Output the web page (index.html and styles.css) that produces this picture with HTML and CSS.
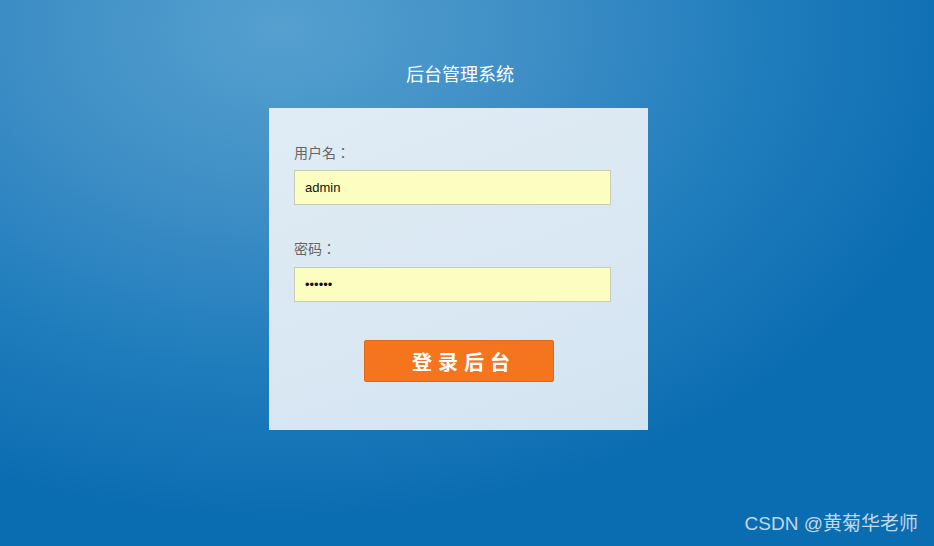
FILE: index.html
```html
<!DOCTYPE html>
<html>

<head>
  <title>后台管理系统</title>
  <link rel="stylesheet" href="styles.css">
</head>

<body>
  <div class="page">
    <h1 class="title">后台管理系统</h1>

    <!-- Login box -->
    <form class="login-box">
      <label class="field-label" for="username">用户名：</label>
      <input class="field-input" type="text" id="username" name="username" value="admin">

      <label class="field-label second" for="password">密码：</label>
      <input class="field-input" type="password" id="password" name="password" value="123456">

      <div class="btn-row">
        <button type="submit" class="login-btn">登录后台</button>
      </div>
    </form>

    <div class="watermark">CSDN @黄菊华老师</div>
  </div>
</body>

</html>
```

FILE: styles.css
```css
/* Global Styles */
html, body {
  margin: 0;
  padding: 0;
  height: 100%;
}

body {
  font-family: "Liberation Sans", Arial, "Noto Sans CJK SC", sans-serif;
  background-color: #2a82c0;
  background-image: radial-gradient(ellipse 75% 90% at 30% 5%, #55a0cf 0%, #3f8fc6 35%, #1f7cbc 70%, #0b6db1 100%);
  overflow: hidden;
}

.page {
  position: relative;
  box-sizing: border-box;
  height: 100%;
  padding-right: 17px;
  display: flex;
  flex-direction: column;
  align-items: center;
}

/* Title */
.title {
  margin: 64px 0 22px 3px;
  font-size: 18px;
  line-height: 22px;
  font-weight: normal;
  color: #ffffff;
}

/* Login box */
.login-box {
  width: 329px;
  padding: 34px 25px 48px;
  background: linear-gradient(160deg, #e0ecf5 0%, #dae8f3 50%, #d3e4f1 100%);
  display: flex;
  flex-direction: column;
  align-items: flex-start;
}

.field-label {
  font-family: "Noto Sans CJK TC", "Noto Sans CJK SC", sans-serif;
  font-size: 14px;
  line-height: 20px;
  color: #666666;
  margin-bottom: 8px;
}

.field-label.second {
  margin-top: 33px;
  margin-bottom: 9px;
}

.field-input {
  box-sizing: border-box;
  width: 317px;
  height: 35px;
  margin: 0;
  padding: 0 10px;
  background-color: #fcfdc0;
  border: 1px solid #c9ccb4;
  font-family: "Liberation Sans", Arial, sans-serif;
  font-size: 13px;
  color: #111111;
  outline: none;
}

/* Button */
.btn-row {
  width: 100%;
  display: flex;
  justify-content: center;
  margin-top: 38px;
}

.login-btn {
  width: 190px;
  height: 42px;
  margin-left: 1px;
  background-color: #f5751e;
  border: 1px solid #e0661a;
  border-radius: 2px;
  color: #ffffff;
  font-family: "Noto Sans CJK SC", sans-serif;
  font-size: 20px;
  font-weight: bold;
  letter-spacing: 6px;
  padding: 0 0 0 10px;
  cursor: pointer;
}

/* Watermark */
.watermark {
  position: absolute;
  right: 16px;
  bottom: 11px;
  font-size: 19px;
  line-height: 22px;
  color: rgba(225, 235, 245, 0.85);
  font-family: "Liberation Sans", Arial, "Noto Sans CJK SC", sans-serif;
}
```
